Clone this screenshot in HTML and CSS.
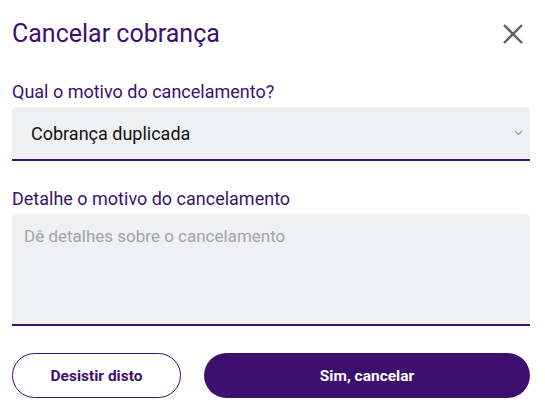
FILE: index.html
```html
<!DOCTYPE html>
<html lang="pt-BR">
<head>
<meta charset="utf-8">
<title>Cancelar cobrança</title>
<link rel="stylesheet" href="styles.css">
</head>
<body>
<div class="dialog">
  <div class="header">
    <h1 class="title">Cancelar cobrança</h1>
    <button class="close" aria-label="Fechar">
      <svg width="20" height="20" viewBox="0 0 20 20"><path d="M1 1 L19 19 M19 1 L1 19" stroke="#5f5f5f" stroke-width="2.4" fill="none"/></svg>
    </button>
  </div>
  <div class="field">
    <label class="label">Qual o motivo do cancelamento?</label>
    <div class="select">
      <span class="select-value">Cobrança duplicada</span>
      <svg class="chevron" width="9" height="6" viewBox="0 0 9 6"><path d="M1 1 L4.5 4.5 L8 1" stroke="#9a9a9a" stroke-width="1.2" fill="none"/></svg>
    </div>
  </div>
  <div class="field field-2">
    <label class="label">Detalhe o motivo do cancelamento</label>
    <div class="textarea"><span class="placeholder">Dê detalhes sobre o cancelamento</span></div>
  </div>
  <div class="actions">
    <button class="btn btn-outline">Desistir disto</button>
    <button class="btn btn-primary">Sim, cancelar</button>
  </div>
</div>
</body>
</html>
```
FILE: styles.css
```css
* { box-sizing: border-box; }
html, body { margin: 0; padding: 0; background: #fff; }
body { font-family: Roboto, "Noto Sans", Arial, sans-serif; }
.dialog { width: 545px; padding: 0 15px 0 12px; }
.header { display: flex; justify-content: space-between; align-items: center; height: 66px; padding-top: 1px; }
.title { margin: 0; font-size: 25px; font-weight: 400; color: #3d1070; line-height: 30px; }
.close { background: none; border: 0; padding: 0; margin-right: 7px; width: 20px; height: 20px; display: flex; }
.field { display: flex; flex-direction: column; }
.label { font-size: 18px; color: #3d1070; line-height: 22px; margin-top: 15px; margin-bottom: 4px; }
.select { height: 54px; background: #eff0f2; border-radius: 4px 4px 0 0; border-bottom: 2px solid #3d1070; display: flex; align-items: center; justify-content: space-between; padding: 0 7px 0 19px; }
.select-value { font-size: 18px; color: #111; }
.field-2 .label { margin-top: 27px; margin-bottom: 4px; }
.textarea { height: 112px; background: #eff0f2; border-radius: 4px 4px 0 0; border-bottom: 2px solid #3d1070; padding: 12px 12px; }
.placeholder { font-size: 17px; color: #a3a3a8; }
.actions { display: flex; gap: 23px; margin-top: 27px; }
.btn { height: 45px; border-radius: 23px; font-family: Roboto, Arial, sans-serif; font-weight: 700; font-size: 15.5px; }
.btn-outline { width: 169px; background: #fff; border: 1px solid #3d1070; color: #3d1070; }
.btn-primary { flex: 1; background: #3d1070; border: 0; color: #fff; }
```
